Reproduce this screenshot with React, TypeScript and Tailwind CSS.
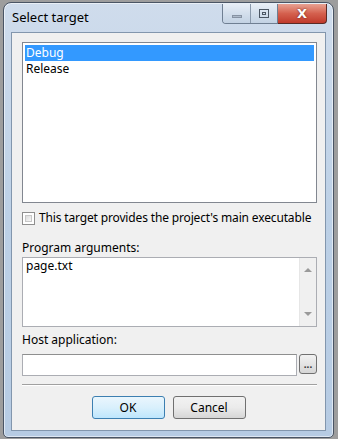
import React from "react";

const font = { fontFamily: '"Noto Sans", "Open Sans", Arial, sans-serif' };

function CaptionButtons() {
  return (
    <div className="flex mt-[1px] h-[20px]">
      <div className="flex h-full rounded-bl-[4px] border border-t-0 border-[#6f7f92] overflow-hidden">
        <div className="w-[28px] h-full flex items-center justify-center bg-gradient-to-b from-[#e8eef6] via-[#d3dfec] to-[#c3d2e3] border-r border-[#8a99ab]">
          <div className="w-[10px] h-[3px] mt-[6px] bg-[#aebbca] border border-[#8793a3]" />
        </div>
        <div className="w-[26px] h-full flex items-center justify-center bg-gradient-to-b from-[#e8eef6] via-[#d3dfec] to-[#c3d2e3]">
          <div className="w-[10px] h-[9px] border border-[#4b5663] flex items-center justify-center">
            <div className="w-[4px] h-[3px] border border-[#4b5663]" />
          </div>
        </div>
      </div>
      <div className="w-[49px] h-full rounded-br-[4px] border border-t-0 border-l-0 border-[#5a2b26] bg-gradient-to-b from-[#e8a192] via-[#d4604e] to-[#c0392b] flex items-center justify-center">
        <span className="text-white text-[13px] font-bold leading-none" style={{ fontFamily: '"DejaVu Sans", sans-serif', textShadow: "0 0 2px #5a1a10" }}>
          X
        </span>
      </div>
    </div>
  );
}

function Checkbox() {
  return (
    <div className="w-[13px] h-[13px] shrink-0 border border-[#8f8f8f] bg-white p-[2px]">
      <div className="w-full h-full bg-gradient-to-br from-[#dcdcdc] to-[#f7f7f7] border border-[#c8c8c8]" />
    </div>
  );
}

function Button({ label, focus }: { label: string; focus?: boolean }) {
  return (
    <div
      className={
        "w-[73px] h-[23px] rounded-[3px] border flex items-center justify-center text-[12px] text-black " +
        (focus
          ? "border-[#3c7fb1] bg-gradient-to-b from-[#eaf6fd] via-[#d9f0fc] to-[#bee6fd]"
          : "border-[#707070] bg-gradient-to-b from-[#f2f2f2] via-[#ebebeb] to-[#d6d6d6]")
      }
    >
      {label}
    </div>
  );
}

export default function App() {
  return (
    <div className="w-[338px] h-[439px] bg-[#9d9d9d] overflow-hidden" style={font}>
      <div className="ml-[3px] mt-[2px] w-[331px] h-[436px] rounded-t-[8px] rounded-b-[5px] border border-[#4a5565] bg-gradient-to-b from-[#cfdcec] via-[#bcd0e6] to-[#b6cbe3] flex flex-col shadow-[inset_0_0_0_1px_rgba(255,255,255,0.55)]">
        {/* title bar */}
        <div className="h-[29px] flex items-start justify-between pl-[8px] pr-[6px]">
          <span className="text-[13px] text-black mt-[8px] leading-none">Select target</span>
          <CaptionButtons />
        </div>

        {/* client */}
        <div className="mx-[7px] flex-1 mb-[6px] border border-[#8296ad] bg-[#f0f0f0] flex flex-col pl-[10px] pr-[8px] pt-[9px] text-[12px] text-black">
          <div className="h-[161px] border border-[#828790] bg-white p-[2px]">
            <div className="h-[16px] bg-[#3399ff] text-white leading-[16px] pl-[1px]">Debug</div>
            <div className="h-[16px] leading-[16px] pl-[1px]">Release</div>
          </div>

          <div className="flex items-center gap-[4px] mt-[8px] h-[14px]">
            <Checkbox />
            <span className="leading-none whitespace-nowrap tracking-[-0.15px]">This target provides the project's main executable</span>
          </div>

          <div className="mt-[17px] leading-none">Program arguments:</div>
          <div className="mt-[3px] h-[70px] border border-[#abadb3] bg-white flex">
            <div className="flex-1 pl-[3px] pt-[2px] leading-none">page.txt</div>
            <div className="w-[17px] bg-[#f0f0f0] border-l border-[#e6e6e6] flex flex-col items-center justify-between py-[10px]">
              <div className="w-0 h-0 border-l-[4px] border-r-[4px] border-b-[4px] border-l-transparent border-r-transparent border-b-[#9a9a9a]" />
              <div className="w-0 h-0 border-l-[4px] border-r-[4px] border-t-[4px] border-l-transparent border-r-transparent border-t-[#9a9a9a]" />
            </div>
          </div>

          <div className="mt-[7px] leading-none">Host application:</div>
          <div className="mt-[8px] flex items-start gap-[2px]">
            <div className="w-[275px] h-[22px] border border-[#abadb3] border-t-[#8e8f8f] bg-white" />
            <div className="w-[18px] h-[20px] rounded-[3px] border border-[#707070] bg-gradient-to-b from-[#f2f2f2] to-[#d6d6d6] flex items-end justify-center pb-[4px]">
              <span className="text-[10px] font-bold leading-none text-[#333]">...</span>
            </div>
          </div>

          <div className="mt-[8px] h-[2px] border-t border-[#a0a0a0] border-b border-b-white" />

          <div className="mt-[10px] flex justify-center gap-[8px] pr-[2px]">
            <Button label="OK" focus />
            <Button label="Cancel" />
          </div>
        </div>
      </div>
    </div>
  );
}
